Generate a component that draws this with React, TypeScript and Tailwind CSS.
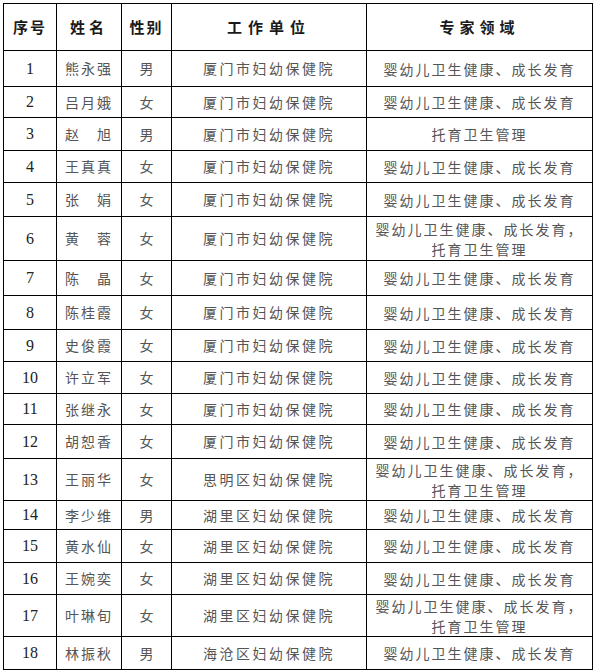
const ZONE = "婴幼儿卫生健康、成长发育";
const ZONE2 = "托育卫生管理";

type Row = { no: number; name: string; sex: string; unit: string; zone: string[]; h: number };

const rows: Row[] = [
  { no: 1, name: "熊永强", sex: "男", unit: "厦门市妇幼保健院", zone: [ZONE], h: 36 },
  { no: 2, name: "吕月娥", sex: "女", unit: "厦门市妇幼保健院", zone: [ZONE], h: 31 },
  { no: 3, name: "赵　旭", sex: "男", unit: "厦门市妇幼保健院", zone: [ZONE2], h: 33 },
  { no: 4, name: "王真真", sex: "女", unit: "厦门市妇幼保健院", zone: [ZONE], h: 32 },
  { no: 5, name: "张　娟", sex: "女", unit: "厦门市妇幼保健院", zone: [ZONE], h: 34 },
  { no: 6, name: "黄　蓉", sex: "女", unit: "厦门市妇幼保健院", zone: [ZONE + "，", ZONE2], h: 44 },
  { no: 7, name: "陈　晶", sex: "女", unit: "厦门市妇幼保健院", zone: [ZONE], h: 35 },
  { no: 8, name: "陈桂霞", sex: "女", unit: "厦门市妇幼保健院", zone: [ZONE], h: 34 },
  { no: 9, name: "史俊霞", sex: "女", unit: "厦门市妇幼保健院", zone: [ZONE], h: 32 },
  { no: 10, name: "许立军", sex: "女", unit: "厦门市妇幼保健院", zone: [ZONE], h: 32 },
  { no: 11, name: "张继永", sex: "女", unit: "厦门市妇幼保健院", zone: [ZONE], h: 31 },
  { no: 12, name: "胡恕香", sex: "女", unit: "厦门市妇幼保健院", zone: [ZONE], h: 34 },
  { no: 13, name: "王丽华", sex: "女", unit: "思明区妇幼保健院", zone: [ZONE + "，", ZONE2], h: 42 },
  { no: 14, name: "李少维", sex: "男", unit: "湖里区妇幼保健院", zone: [ZONE], h: 29 },
  { no: 15, name: "黄水仙", sex: "女", unit: "湖里区妇幼保健院", zone: [ZONE], h: 33 },
  { no: 16, name: "王婉奕", sex: "女", unit: "湖里区妇幼保健院", zone: [ZONE], h: 32 },
  { no: 17, name: "叶琳旬", sex: "女", unit: "湖里区妇幼保健院", zone: [ZONE + "，", ZONE2], h: 42 },
  { no: 18, name: "林振秋", sex: "男", unit: "海沧区妇幼保健院", zone: [ZONE], h: 33 },
];

const cjk = "font-['Noto_Sans_CJK_SC',sans-serif]";
const cell = "flex items-center justify-center border-r border-black text-center";

export default function App() {
  return (
    <div className="min-h-[670px] bg-white pl-[3px] pt-[3px]">
      <div className="w-[590px] border-l border-t border-black">
        <div className={`flex h-[47px] border-b border-black text-[15px] font-bold text-[#1a1a1a] ${cjk}`}>
          <div className={`${cell} w-[53px] tracking-[2px]`}>序号</div>
          <div className={`${cell} w-[65px] tracking-[4px]`}>姓名</div>
          <div className={`${cell} w-[50px] tracking-[2px]`}>性别</div>
          <div className={`${cell} w-[195px] tracking-[6px]`}>工作单位</div>
          <div className={`${cell} w-[226px] tracking-[5px]`}>专家领域</div>
        </div>
        {rows.map((r) => (
          <div key={r.no} className="flex border-b border-black" style={{ height: r.h }}>
            <div className={`${cell} w-[53px] font-['Liberation_Serif',serif] text-[16px] text-[#222]`}>
              {r.no}
            </div>
            <div className={`${cell} w-[65px] text-[14px] tracking-[2px] text-[#555] ${cjk}`}>
              {r.name}
            </div>
            <div className={`${cell} w-[50px] text-[14px] text-[#555] ${cjk}`}>{r.sex}</div>
            <div className={`${cell} w-[195px] text-[14px] tracking-[2.5px] text-[#555] ${cjk}`}>
              {r.unit}
            </div>
            <div
              className={`${cell} w-[226px] flex-col text-[14px] leading-[20px] tracking-[2px] text-[#555] ${cjk}`}
            >
              {r.zone.map((z) => (
                <span key={z}>{z}</span>
              ))}
            </div>
          </div>
        ))}
      </div>
    </div>
  );
}
